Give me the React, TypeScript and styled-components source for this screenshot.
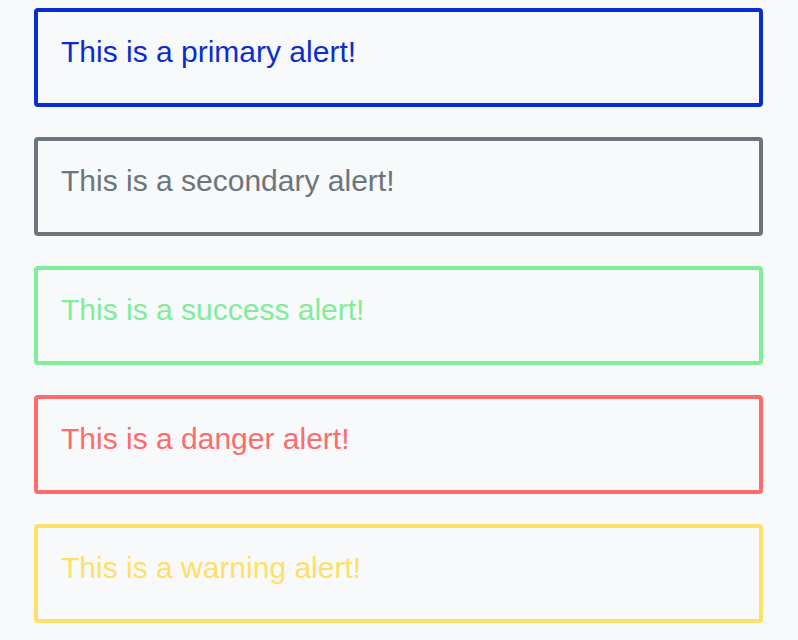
import React, { FC } from "react";
import styled, { createGlobalStyle } from "styled-components";

const GlobalStyle = createGlobalStyle`
  html, body {
    margin: 0;
    padding: 0;
    background: #f8f9fa;
    font-family: "Liberation Sans", Arial, sans-serif;
  }
`;

const colors = {
  primary: "#0a2dd0",
  secondary: "#6c757d",
  success: "#80ed99",
  danger: "#ff6b6b",
  warning: "#ffe066",
};

type Variant = keyof typeof colors;

const AlertList = styled.div`
  display: flex;
  flex-direction: column;
  gap: 30px;
  padding: 8px 35px 0 34px;
`;

const AlertBox = styled.div<{ $variant: Variant }>`
  box-sizing: border-box;
  height: 99px;
  border: 4px solid ${(p) => colors[p.$variant]};
  border-radius: 4px;
  padding: 22px 23px 0;
  color: ${(p) => colors[p.$variant]};
  font-size: 30px;
  line-height: 36px;
`;

const alerts: { variant: Variant; text: string }[] = [
  { variant: "primary", text: "This is a primary alert!" },
  { variant: "secondary", text: "This is a secondary alert!" },
  { variant: "success", text: "This is a success alert!" },
  { variant: "danger", text: "This is a danger alert!" },
  { variant: "warning", text: "This is a warning alert!" },
];

const App: FC = () => {
  return (
    <>
      <GlobalStyle />
      <AlertList>
        {alerts.map((a) => (
          <AlertBox key={a.variant} $variant={a.variant}>
            {a.text}
          </AlertBox>
        ))}
      </AlertList>
    </>
  );
};

export default App;
